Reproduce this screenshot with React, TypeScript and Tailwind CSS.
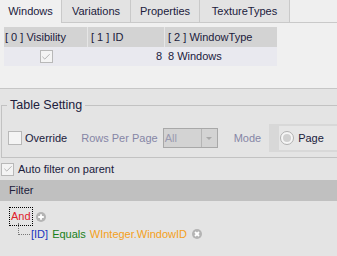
import { Check } from 'lucide-react'

const font = { fontFamily: '"Liberation Sans", Arial, sans-serif' }

function Tab({ label, width, active }: { label: string; width: string; active?: boolean }) {
  return (
    <div
      className={`${width} h-full flex items-center justify-center border-r border-[#c9c9c9] ${
        active ? 'bg-[#f0f0f0]' : 'bg-[#e3e3e3] border-b'
      }`}
    >
      {label}
    </div>
  )
}

function PlusCircle() {
  return (
    <svg width="10" height="10" viewBox="0 0 10 10" className="block">
      <circle cx="5" cy="5" r="5" fill="#b4b4b4" />
      <path d="M5 2.2v5.6M2.2 5h5.6" stroke="#fff" strokeWidth="1.8" />
    </svg>
  )
}

function XCircle() {
  return (
    <svg width="10" height="10" viewBox="0 0 10 10" className="block">
      <circle cx="5" cy="5" r="5" fill="#b4b4b4" />
      <path d="M3 3l4 4M7 3l-4 4" stroke="#fff" strokeWidth="1.8" />
    </svg>
  )
}

export default function App() {
  return (
    <div
      className="w-[337px] h-[256px] overflow-hidden bg-[#e4e4e4] text-[11px] text-[#20203c] flex flex-col"
      style={font}
    >
      {/* tabs */}
      <div className="h-[23px] flex bg-[#efefef] shrink-0">
        <Tab label="Windows" width="w-[62px]" active />
        <Tab label="Variations" width="w-[69px]" />
        <Tab label="Properties" width="w-[69px]" />
        <Tab label="TextureTypes" width="w-[90px]" />
        <div className="flex-1 border-b border-[#c9c9c9]" />
      </div>

      {/* grid */}
      <div className="h-[66px] shrink-0 bg-[#f0f0f0] border-b border-[#c6c6c6] pl-[4px] pt-[4px]">
        <div className="flex h-[20px] bg-[#d3d3d3] w-[273px]">
          <div className="w-[84px] pl-[1px] flex items-center border-r border-[#e6e6e6]">[ 0 ] Visibility</div>
          <div className="w-[77px] pl-[3px] flex items-center border-r border-[#e6e6e6]">[ 1 ] ID</div>
          <div className="flex-1 pl-[3px] flex items-center">[ 2 ] WindowType</div>
        </div>
        <div className="flex h-[19px] bg-[#e9e9ef] w-[273px]">
          <div className="w-[84px] flex items-center justify-center">
            <div className="w-[13px] h-[13px] border border-[#b8b8b8] bg-[#f4f4f4] flex items-center justify-center">
              <Check size={10} strokeWidth={1.5} color="#8a8a8a" />
            </div>
          </div>
          <div className="w-[77px] flex items-center justify-end pr-[3px]">8</div>
          <div className="flex-1 pl-[3px] flex items-center">8 Windows</div>
        </div>
      </div>

      {/* table setting */}
      <fieldset className="mt-[8px] ml-[1px] h-[61px] border-l border-t border-b border-[#c2c2c2] shrink-0 min-w-0">
        <legend className="ml-[5px] px-[3px] text-[12.5px] leading-[16px]">Table Setting</legend>
        <div className="flex items-center h-[28px] mt-[11px] whitespace-nowrap">
          <div className="ml-[6px] w-[14px] h-[14px] shrink-0 border border-[#b8b8b8] bg-[#f4f4f4]" />
          <span className="ml-[3px]">Override</span>
          <span className="ml-[14px] text-[#8686a6]">Rows Per Page</span>
          <div className="ml-[5px] w-[55px] shrink-0 h-[20px] border border-[#a8a8a8] bg-[#d3d3d3] flex">
            <span className="flex-1 pl-[1px] text-[#9a9ab0] leading-[18px]">All</span>
            <div className="w-[16px] border-l border-[#b5b5b5] flex items-center justify-center">
              <div className="w-0 h-0 border-l-[3px] border-r-[3px] border-t-[3px] border-l-transparent border-r-transparent border-t-[#a8a8a8]" />
            </div>
          </div>
          <span className="ml-[16px] text-[#8686a6]">Mode</span>
          <div className="ml-[8px] flex-1 h-[28px] bg-[#d8d8d8] pl-[10px] py-[2px]">
            <div className="h-full bg-[#e6e6e6] flex items-center pl-[1px]">
              <div className="w-[14px] h-[14px] shrink-0 rounded-full border border-[#b0b0b0] bg-[#f6f6f6] flex items-center justify-center">
                <div className="w-[8px] h-[8px] rounded-full bg-[#d0d0d0]" />
              </div>
              <span className="ml-[4px]">Page</span>
            </div>
          </div>
        </div>
      </fieldset>

      {/* auto filter */}
      <div className="flex items-center h-[16px] mt-[3px] shrink-0">
        <div className="ml-[1px] w-[13px] h-[13px] border border-[#b8b8b8] bg-[#f4f4f4] flex items-center justify-center">
          <Check size={10} strokeWidth={1.5} color="#8a8a8a" />
        </div>
        <span className="ml-[4px]">Auto filter on parent</span>
      </div>

      {/* filter */}
      <div className="mt-[3px] h-[21px] bg-[#c0c0c0] pl-[9px] flex items-center shrink-0">Filter</div>
      <div className="pl-[9px] pt-[6px]">
        <div className="flex items-center">
          <span className="border border-dotted border-black px-[1px] leading-[17px] text-[#e0202a]">And</span>
          <span className="ml-[3px]">
            <PlusCircle />
          </span>
        </div>
        <div className="flex items-center">
          <div className="ml-[9px] w-[12px] h-[12px] -mt-[10px] border-l border-b border-dotted border-[#777]" />
          <span className="ml-[1px] text-[#2036c0]">[ID]</span>
          <span className="ml-[4px] text-[#188018]">Equals</span>
          <span className="ml-[4px] text-[#f4a020]">WInteger.WindowID</span>
          <span className="ml-[5px]">
            <XCircle />
          </span>
        </div>
      </div>
    </div>
  )
}
